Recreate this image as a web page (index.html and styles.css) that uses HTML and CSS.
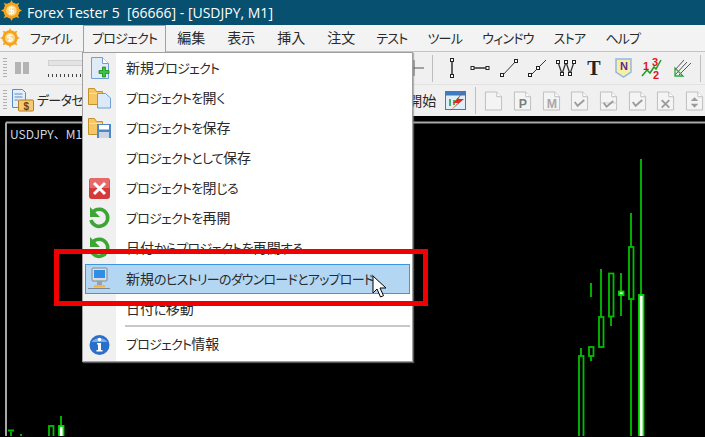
FILE: index.html
```html
<!DOCTYPE html>
<html lang="ja">
<head>
<meta charset="utf-8">
<title>Forex Tester 5</title>
<link rel="stylesheet" href="styles.css">
</head>
<body>
<div class="app">
  <header class="titlebar">
    <svg class="logo big" width="21" height="21" viewBox="0 0 22 22"><use href="#sun"/></svg>
    <span class="apptitle">Forex Tester 5&nbsp; [66666] - [USDJPY, M1]</span>
  </header>
  <nav class="menubar">
    <svg class="logo small" width="20" height="20" viewBox="0 0 22 22"><use href="#sun"/></svg>
    <span class="mi first">ファイル</span>
    <span class="mi active">プロジェクト</span>
    <span class="mi kj"><b>編集</b></span>
    <span class="mi kj"><b>表示</b></span>
    <span class="mi kj"><b>挿入</b></span>
    <span class="mi kj"><b>注文</b></span>
    <span class="mi">テスト</span>
    <span class="mi">ツール</span>
    <span class="mi">ウィンドウ</span>
    <span class="mi">ストア</span>
    <span class="mi">ヘルプ</span>
  </nav>
  <div class="toolbar one">
    <span class="grip"></span>
    <svg class="pause" width="14" height="12" viewBox="0 0 14 12"><path d="M0 0h6v12H0zM8 0h6v12H8z" fill="#b4b4b4"/></svg>
    <span class="slider"><span class="track"></span><span class="ticks"></span></span>
    <span class="spacer"></span>
    <svg class="tool" width="20" height="20" viewBox="0 0 20 20"><path d="M10 2v16M0 10h20" stroke="#555" fill="none"/></svg>
    <span class="sep"></span>
    <svg class="tool" width="20" height="22" viewBox="0 0 20 22"><path d="M10 3v16" stroke="#333" stroke-width="1.500"/><rect x="8.500" y="1.500" width="3" height="3" fill="#fff" stroke="#222"/><rect x="8.500" y="17.500" width="3" height="3" fill="#fff" stroke="#222"/></svg>
    <svg class="tool" width="20" height="22" viewBox="0 0 20 22"><path d="M2 11h16" stroke="#333" stroke-width="1.500"/><rect x="1" y="9.500" width="3" height="3" fill="#fff" stroke="#222"/><rect x="16" y="9.500" width="3" height="3" fill="#fff" stroke="#222"/></svg>
    <svg class="tool" width="20" height="22" viewBox="0 0 20 22"><path d="M3 19L17 4" stroke="#333"/><rect x="1.500" y="16.500" width="3" height="3" fill="#fff" stroke="#222"/><rect x="15.500" y="2.500" width="3" height="3" fill="#fff" stroke="#222"/></svg>
    <svg class="tool" width="20" height="22" viewBox="0 0 20 22"><path d="M3 19L19 3" stroke="#333"/><rect x="1.500" y="16.500" width="3" height="3" fill="#fff" stroke="#222"/><rect x="9.500" y="9.500" width="3" height="3" fill="#fff" stroke="#222"/></svg>
    <svg class="tool" width="20" height="22" viewBox="0 0 20 22"><path d="M2 5l4 12 4-12 4 12 4-12" stroke="#333" fill="none" stroke-width="1.300"/><g fill="#fff" stroke="#222"><rect x=".5" y="3.500" width="3" height="3"/><rect x="8.500" y="3.500" width="3" height="3"/><rect x="16.500" y="3.500" width="3" height="3"/><rect x="4.500" y="15.500" width="3" height="3"/><rect x="12.500" y="15.500" width="3" height="3"/></g></svg>
    <span class="glyph-t">T</span>
    <svg class="tool" width="20" height="22" viewBox="0 0 20 22"><path d="M3 2h15v13l-7.500 5L3 15z" fill="#f9efa4" stroke="#8db9e4" stroke-width="1.500"/><text x="10.500" y="13" class="n-label">N</text></svg>
    <svg class="tool" width="22" height="24" viewBox="0 0 22 24"><path d="M1 20l5-6 3 3 4-6 2 2 5-9" fill="none" stroke="#1b9c22" stroke-width="1.500"/><text x="2" y="14" class="num">1</text><text x="11" y="10" class="num">3</text><text x="12" y="23" class="num">2</text></svg>
    <svg class="tool" width="20" height="22" viewBox="0 0 20 22"><path d="M3 18L15 5M7 18L19 6M3 13L12 3" stroke="#555" fill="none"/><path d="M3 11v8h8z" fill="none" stroke="#2ea63a" stroke-width="1.300"/></svg>
    <span class="sep"></span>
  </div>
  <div class="toolbar two">
    <span class="grip"></span>
    <svg class="datacenter" width="26" height="26" viewBox="0 0 26 26"><path d="M1.500 1.500h10l3 3v15h-13z" fill="#e3eefb" stroke="#5b8cc4"/><path d="M3.500 6h8M3.500 9h8M3.500 12h4" stroke="#5b8cc4"/><rect x="7.500" y="12" width="15" height="11" rx="1" fill="#f7c973" stroke="#b37c25"/><text x="15" y="21.500" class="dollar">$</text></svg>
    <span class="tb-text">データセンター</span>
    <span class="spacer"></span>
    <span class="tb-text start"><b>開始</b></span>
    <svg class="tool" width="22" height="22" viewBox="0 0 22 22"><rect x=".5" y="1.500" width="20" height="18" fill="#dfeefa" stroke="#3d7cc0"/><rect x="1" y="2" width="19" height="3.500" fill="#3d7cc0"/><path d="M5 9v7M9 10v5M13 8v5" stroke="#1e9c2b" stroke-width="1.500"/><path d="M20 0L8 13h5L4 22 19 9h-6z" fill="#e12a1c"/></svg>
    <span class="sep tall"></span>
    <svg class="doc" width="19" height="22" viewBox="0 0 20 22"><use href="#page"/></svg>
    <svg class="doc" width="19" height="22" viewBox="0 0 20 22"><use href="#page"/><text x="10" y="18" class="doc-letter">P</text></svg>
    <svg class="doc" width="19" height="22" viewBox="0 0 20 22"><use href="#page"/><text x="10" y="18" class="doc-letter pale">M</text></svg>
    <svg class="doc" width="19" height="22" viewBox="0 0 20 22"><use href="#page"/><path d="M5 12l3 4 7-6" fill="none" stroke="#9c9c9c" stroke-width="2"/></svg>
    <svg class="doc" width="19" height="22" viewBox="0 0 20 22"><use href="#page"/><path d="M1 13h18" stroke="#ccc"/><path d="M5 13l3 4 7-6" fill="none" stroke="#9c9c9c" stroke-width="2"/></svg>
    <svg class="doc" width="19" height="22" viewBox="0 0 20 22"><use href="#page"/><path d="M5 12l3 4 7-6" fill="none" stroke="#9c9c9c" stroke-width="2"/></svg>
    <svg class="doc" width="19" height="22" viewBox="0 0 20 22"><use href="#page"/><path d="M6 10l8 8M14 10l-8 8" stroke="#9c9c9c" stroke-width="2"/></svg>
    <svg class="doc" width="19" height="22" viewBox="0 0 20 22"><use href="#page"/><path d="M10 7l4 4H6zM10 18l4-4H6z" fill="#9c9c9c"/></svg>
  </div>
  <main class="chart">
    <svg class="candles" width="705" height="320" viewBox="0 117 705 320">
      <path class="axis" d="M6 123.500V437M6 123.500H705"/>
      <g class="green">
        <path d="M581 349v8M591 284v14M591 357v5M601 270v48M611 318v9M621 274v43M631 214v34M631 300v137M641 160v136M61 417v10M11 433v4M21 435v2M8 431.500h6"/>
        <rect x="579" y="357" width="4.500" height="85"/>
        <rect x="589" y="348" width="4.500" height="9"/>
        <rect x="599" y="318" width="4.500" height="30"/>
        <rect x="609" y="274.500" width="4.500" height="43"/>
        <rect x="629" y="248" width="4.500" height="52"/>
        <rect x="49" y="427" width="4.500" height="14"/>
      </g>
      <g class="bull">
        <rect x="619" y="292.500" width="4.500" height="3.500"/>
        <rect x="639" y="296" width="4.500" height="146"/>
        <rect x="59" y="427" width="4.500" height="14"/>
      </g>
    </svg>
    <span class="symbol">USDJPY、M1</span>
  </main>

  <div class="dropdown">
    <div class="row"><svg class="ico" width="26" height="26" viewBox="0 0 26 26"><use href="#paper"/><path d="M16 15.500h3.500V12h3v3.500H26v3h-3.500V22h-3v-3.500H16z" transform="translate(-2 0)" fill="#3ec33e" stroke="#178a17" stroke-width=".8"/></svg><span class="label"><b>新規</b>プロジェクト</span></div>
    <div class="row"><svg class="ico" width="26" height="26" viewBox="0 0 26 26"><use href="#folder"/><path d="M12.500 8.500h8l5 4.500v10h-13z" fill="#dce9f8" stroke="#6f9fd2"/></svg><span class="label">プロジェクトを<b>開</b>く</span></div>
    <div class="row"><svg class="ico" width="26" height="26" viewBox="0 0 26 26"><use href="#folder"/><rect x="12" y="9" width="14" height="14" fill="#4d87c7"/><rect x="14" y="10" width="10" height="4.500" fill="#fff"/><rect x="14" y="17" width="10" height="6" fill="#ccd6e2"/></svg><span class="label">プロジェクトを<b>保存</b></span></div>
    <div class="row"><span class="noico"></span><span class="label">プロジェクトとして<b>保存</b></span></div>
    <div class="row"><svg class="ico" width="26" height="26" viewBox="0 0 26 26"><rect x="4" y="3" width="21" height="21" rx="3" fill="#d43a3a"/><path d="M4.500 13V6a3 3 0 0 1 3-3h14a3 3 0 0 1 3 3v7z" fill="#e56a6a"/><path d="M9 8l11 11M20 8L9 19" stroke="#fff" stroke-width="3"/></svg><span class="label">プロジェクトを<b>閉</b>じる</span></div>
    <div class="row"><svg class="ico" width="26" height="26" viewBox="0 0 26 26"><use href="#reload"/></svg><span class="label">プロジェクトを<b>再開</b></span></div>
    <div class="row"><svg class="ico" width="26" height="26" viewBox="0 0 26 26"><use href="#reload"/></svg><span class="label"><b>日付</b>からプロジェクトを<b>再開</b>する</span></div>
    <div class="row selected"><svg class="ico" width="26" height="26" viewBox="0 0 26 26"><rect x="7" y="2" width="15" height="13" rx="1" fill="#d9dde4" stroke="#7f8794"/><rect x="9" y="4" width="11" height="8" fill="#2d8fe6"/><path d="M12 15h5v4h-5z" fill="#9aa1ac"/><path d="M9 19h11v2.500H9z" fill="#f1b548"/><path d="M3 22.500h22" stroke="#7f8794"/></svg><span class="label"><b>新規</b>のヒストリーのダウンロードとアップロード</span></div>
    <div class="row"><span class="noico"></span><span class="label"><b>日付</b>に<b>移動</b></span></div>
    <div class="divider"></div>
    <div class="row"><svg class="ico" width="26" height="26" viewBox="0 0 26 26"><circle cx="14.500" cy="14" r="10" fill="#2a6fc9"/><path d="M6.500 11a9 7 0 0 1 16 0z" fill="#7eaee8"/><circle cx="14.500" cy="8.500" r="1.800" fill="#fff"/><path d="M12 12h4v7h1.500v1.500h-6V19H13v-5.500h-1z" fill="#fff"/></svg><span class="label">プロジェクト<b>情報</b></span></div>
  </div>
  <div class="callout"></div>
  <svg class="cursor" width="18" height="24" viewBox="0 0 18 24"><path d="M1 1v17l4-4 3.500 8 3-1.300-3.500-7.700h6z" fill="#fff" stroke="#000"/></svg>
</div>

<svg class="defs" width="0" height="0">
  <defs>
    <g id="sun"><g fill="#f5a31c"><circle cx="11" cy="11" r="8.500"/><path d="M11 0l2 4h-4zM11 22l2-4h-4zM0 11l4-2v4zM22 11l-4-2v4zM3 3l4 1.500-2.500 2.500zM19 3l-4 1.500 2.500 2.500zM3 19l4-1.500-2.500-2.500zM19 19l-4-1.500 2.500-2.500z"/></g><circle cx="11" cy="11" r="5.500" fill="#fbd788"/><path d="M13.500 8h-3.500a1.500 1.500 0 0 0 0 3h2a1.500 1.500 0 0 1 0 3h-3.500M11 6.500v9" fill="none" stroke="#fff" stroke-width="1.200"/></g>
    <g id="page"><path d="M1.500 1.500h12l5 5v14h-17z" fill="#f4f4f4" stroke="#bdbdbd"/><path d="M13.500 1.500v5h5" fill="#fff" stroke="#bdbdbd"/></g>
    <g id="paper"><path d="M6.500 2.500h11l6 6v15h-17z" fill="#dfebf9" stroke="#6f9fd2"/><path d="M17.500 2.500v6h6" fill="#fff" stroke="#6f9fd2"/></g>
    <g id="folder"><path d="M3.500 3.500h6l2 3h6v13h-14z" fill="#f6c865" stroke="#c4912c"/><path d="M4 8.500h13" stroke="#fde4a2"/></g>
    <g id="reload"><path d="M8 7a8.500 8.500 0 1 1-2 8" fill="none" stroke="#3da535" stroke-width="3.600"/><path d="M5 2v10h10z" fill="#3da535"/></g>
  </defs>
</svg>
</body>
</html>
```
FILE: styles.css
```css
* { box-sizing: border-box; }
html, body { margin: 0; padding: 0; background: #000; }
.app {
  position: relative;
  width: 705px;
  height: 437px;
  overflow: hidden;
  display: flex;
  flex-direction: column;
  font-family: "Noto Sans CJK JP", "Noto Sans", sans-serif;
  font-size: 13px;
  letter-spacing: -.75px;
  font-feature-settings: "palt";
  color: #2a2a2a;
}
/* Kanji sit at full width while kana are set tight, as in Meiryo UI */
b { font-weight: 400; font-size: 14px; letter-spacing: 0; }
.defs { position: absolute; }

.titlebar {
  height: 25px;
  flex: none;
  background: #07506f;
  display: flex;
  align-items: center;
  padding-left: 1px;
  gap: 5px;
}
.logo.big { margin-top: -4px; flex: none; }
.apptitle { font-family: "Open Sans", "Noto Sans", sans-serif; font-size: 14px; letter-spacing: 0; color: #fff; white-space: pre; }

.menubar {
  height: 27px;
  flex: none;
  background: #f3f3f3;
  border-bottom: 1px solid #c4c4c4;
  display: flex;
  align-items: center;
}
.logo.small { margin-right: 10px; flex: none; }
.mi { padding: 0 10px; white-space: nowrap; margin-bottom: 2px; }
.mi.kj { padding: 0 11px; }
.mi.first { padding: 0 11px 0 0; }
.mi.active {
  height: 27px;
  padding: 0 8px;
  margin-bottom: 0;
  line-height: 23px;
  border: 1px solid #a0a0a0;
  border-bottom: 0;
  background: #f3f3f3;
}

.toolbar {
  flex: none;
  background: #f0f0f0;
  display: flex;
  align-items: center;
}
.toolbar.one { height: 32px; gap: 8.500px; padding: 0 4px 0 3px; }
.toolbar.two { height: 32px; border-top: 1px solid #e2e2e2; padding: 0 1px 0 3px; overflow: hidden; }
.grip { width: 4px; height: 21px; flex: none; background: repeating-linear-gradient(#b0b0b0 0 1px, #f0f0f0 1px 3px); }
.pause { margin-left: -1px; flex: none; }
.slider { width: 60px; margin-left: 11px; flex: none; display: flex; flex-direction: column; gap: 8px; }
.track { height: 6px; background: #e3e3e3; border: 1px solid #d0d0d0; }
.ticks { height: 3px; background: repeating-linear-gradient(90deg, #444 0 1px, transparent 1px 4px); }
.spacer { flex: 1; }
.tool { flex: none; }
.sep { width: 1px; height: 27px; background: #bdbdbd; flex: none; }
.sep.tall { margin: 0 8px; }
.datacenter { margin-left: 4px; flex: none; }
.tb-text { white-space: nowrap; margin-bottom: 2px; }
.tb-text.start { margin-right: 9px; }
.doc { flex: none; margin-right: 9.700px; }
.doc:last-child { margin-right: 0; }
.glyph-t { width: 20px; text-align: center; flex: none; font-family: "Liberation Serif", serif; font-weight: 700; font-size: 20px; letter-spacing: 0; color: #222; line-height: 1; }
.n-label { font-family: "Liberation Sans", sans-serif; font-size: 11px; font-weight: 700; text-anchor: middle; fill: #5b2b96; }
.num { font-family: "Liberation Sans", sans-serif; font-size: 11px; font-weight: 700; fill: #e0141c; }
.dollar { font-family: "Liberation Sans", sans-serif; font-size: 10px; font-weight: 700; text-anchor: middle; fill: #6b4210; }
.doc-letter { font-family: "Liberation Sans", sans-serif; font-size: 13px; font-weight: 700; text-anchor: middle; fill: #7d7d7d; }
.doc-letter.pale { fill: #a8a8a8; }

.chart { position: relative; flex: 1; background: #000; }
.candles { display: block; }
.axis { fill: none; stroke: #a8a8a8; stroke-width: 2; }
.green { fill: none; stroke: #00bf00; stroke-width: 1.800; }
.bull { fill: #fff; stroke: #00e000; stroke-width: 1.800; }
.symbol { position: absolute; left: 10px; top: 9px; color: #cfd8e2; font-size: 12px; letter-spacing: 0; font-feature-settings: normal; white-space: nowrap; }

.dropdown {
  position: absolute;
  left: 82px;
  top: 52px;
  width: 331px;
  height: 310px;
  background: linear-gradient(90deg, #f0f0f0 0 33px, #fff 33px);
  border: 1px solid #a0a0a0;
  box-shadow: 1px 1px 1px rgba(140, 140, 140, .6);
  padding: 0 2px;
}
.row {
  height: 30px;
  display: flex;
  align-items: center;
  white-space: nowrap;
  border: 1px solid transparent;
}
.label { margin-bottom: 2px; }
.ico { flex: none; margin-left: -1px; margin-right: 15px; }
.noico { width: 40px; flex: none; }
.selected { margin-top: 1px; background: #b3d7f3; border-color: #3d96e0; }
.divider { height: 2px; background: #c8c8c8; margin: 1px 0 2px 40px; }

.callout {
  position: absolute;
  left: 54px;
  top: 249px;
  width: 374px;
  height: 57px;
  border: 5px solid #f00000;
}
.cursor { position: absolute; left: 372px; top: 275px; }
```
